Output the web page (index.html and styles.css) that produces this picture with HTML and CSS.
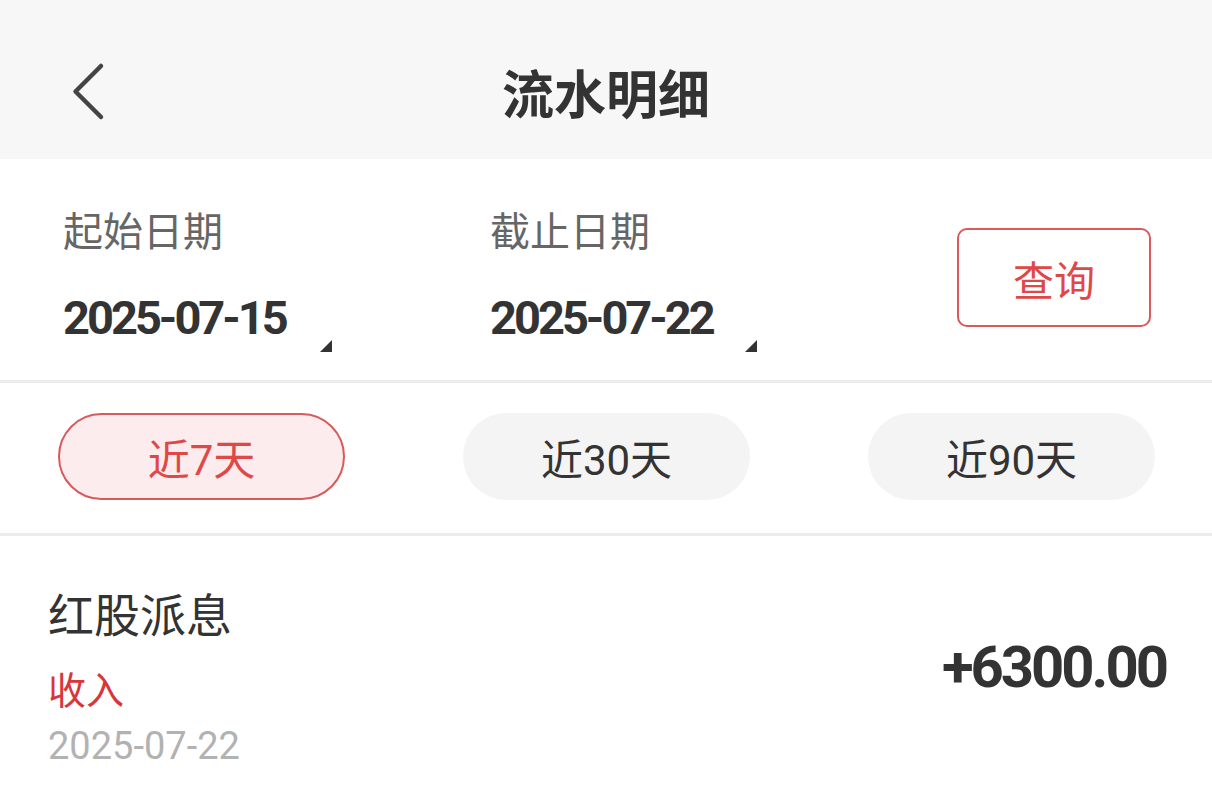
FILE: index.html
```html
<!DOCTYPE html>
<html lang="zh-CN">
<head>
<meta charset="utf-8">
<title>流水明细</title>
<link rel="stylesheet" href="styles.css">
</head>
<body>
<div class="page">
  <header class="topbar">
    <div class="back">
      <svg width="36" height="60" viewBox="0 0 36 60">
        <polyline points="31,4 5.5,29.5 31,55" fill="none" stroke="#444" stroke-width="4.5" stroke-linecap="round" stroke-linejoin="round"/>
      </svg>
    </div>
    <h1 class="title">流水明细</h1>
    <div class="spacer"></div>
  </header>

  <section class="range">
    <div class="picker">
      <div class="label">起始日期</div>
      <div class="value">2025-07-15</div>
      <span class="caret"></span>
    </div>
    <div class="picker picker-2">
      <div class="label">截止日期</div>
      <div class="value">2025-07-22</div>
      <span class="caret"></span>
    </div>
    <button class="query">查询</button>
  </section>

  <section class="quick">
    <div class="chip active">近7天</div>
    <div class="chip">近30天</div>
    <div class="chip">近90天</div>
  </section>

  <section class="item">
    <div class="info">
      <div class="name">红股派息</div>
      <div class="type">收入</div>
      <div class="date">2025-07-22</div>
    </div>
    <div class="amount">+6300.00</div>
  </section>
</div>
</body>
</html>
```

FILE: styles.css
```css
* { box-sizing: border-box; }
html, body {
  margin: 0;
  padding: 0;
  background: #ffffff;
}
body {
  font-family: Roboto, "Noto Sans CJK SC", sans-serif;
  color: #333333;
  width: 1212px;
  height: 806px;
  overflow: hidden;
}

.topbar {
  height: 159px;
  background: #f7f7f7;
  padding-top: 24px;
  display: grid;
  grid-template-columns: 1fr auto 1fr;
  align-items: center;
}
.back {
  padding-left: 70px;
  height: 60px;
  display: flex;
  align-items: center;
}
.back svg { display: block; }
.title {
  margin: 0;
  font-size: 52px;
  line-height: 60px;
  font-weight: 700;
  color: #333333;
  font-family: "Noto Sans CJK SC", sans-serif;
}

.range {
  display: flex;
  align-items: flex-start;
  padding: 50px 61px 28px 63px;
}
.picker {
  width: 269px;
  display: flex;
  flex-direction: column;
}
.picker-2 {
  width: 267px;
  margin-left: 158px;
}
.label {
  font-family: "Noto Sans CJK SC", sans-serif;
  font-size: 40px;
  line-height: 40px;
  color: #666666;
}
.value {
  margin-top: 45px;
  font-size: 47px;
  line-height: 48px;
  font-weight: 700;
  letter-spacing: -3px;
  color: #333333;
}
.caret {
  align-self: flex-end;
  margin-top: -2px;
  width: 0;
  height: 0;
  border-left: 12px solid transparent;
  border-bottom: 12px solid #333333;
}
.query {
  margin-left: auto;
  margin-top: 19px;
  width: 194px;
  height: 99px;
  border: 2px solid #d85a5a;
  border-radius: 10px;
  background: #ffffff;
  color: #e04848;
  font-family: "Noto Sans CJK SC", sans-serif;
  font-size: 41px;
  padding: 0;
}

.quick {
  display: flex;
  justify-content: space-between;
  padding: 30px 57px 33px 58px;
  border-top: 3px solid #ececec;
  border-bottom: 3px solid #ececec;
}
.chip {
  width: 287px;
  height: 87px;
  border-radius: 44px;
  background: #f4f4f4;
  display: flex;
  align-items: center;
  justify-content: center;
  font-size: 42px;
  color: #333333;
}
.chip.active {
  background: #fdeced;
  border: 2px solid #d85a5a;
  color: #e04848;
}

.item {
  display: flex;
  justify-content: space-between;
  align-items: flex-start;
  padding: 53px 46px 0 48px;
}
.name {
  font-family: "Noto Sans CJK SC", sans-serif;
  font-size: 46px;
  line-height: 46px;
  color: #333333;
}
.type {
  margin-top: 34px;
  font-family: "Noto Sans CJK SC", sans-serif;
  font-size: 38px;
  line-height: 38px;
  color: #d8363a;
}
.date {
  margin-top: 20px;
  font-size: 38px;
  line-height: 38px;
  color: #b2b2b2;
}
.amount {
  margin-top: 49px;
  font-size: 58px;
  line-height: 58px;
  font-weight: 700;
  letter-spacing: -3px;
  color: #333333;
}
```
